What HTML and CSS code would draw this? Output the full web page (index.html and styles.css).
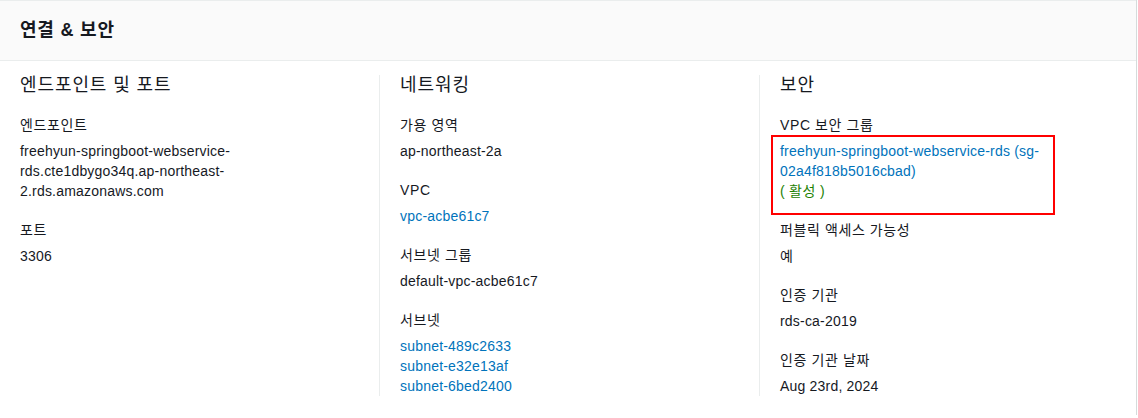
FILE: index.html
```html
<!DOCTYPE html>
<html lang="ko">
<head>
<meta charset="utf-8">
<title>연결 &amp; 보안</title>
<link rel="stylesheet" href="styles.css">
</head>
<body>
<div class="panel">
  <div class="panel-header">
    <h2 class="panel-title">연결 &amp; 보안</h2>
  </div>
  <div class="panel-body">
    <div class="column">
      <h3 class="column-title">엔드포인트 및 포트</h3>
      <div class="item">
        <div class="label">엔드포인트</div>
        <div class="value">freehyun-springboot-webservice-rds.cte1dbygo34q.ap-northeast-2.rds.amazonaws.com</div>
      </div>
      <div class="item">
        <div class="label">포트</div>
        <div class="value">3306</div>
      </div>
    </div>
    <div class="column divided">
      <h3 class="column-title">네트워킹</h3>
      <div class="item">
        <div class="label">가용 영역</div>
        <div class="value">ap-northeast-2a</div>
      </div>
      <div class="item">
        <div class="label">VPC</div>
        <div class="value"><a class="link" href="#">vpc-acbe61c7</a></div>
      </div>
      <div class="item">
        <div class="label">서브넷 그룹</div>
        <div class="value">default-vpc-acbe61c7</div>
      </div>
      <div class="item">
        <div class="label">서브넷</div>
        <div class="value">
          <a class="link block" href="#">subnet-489c2633</a>
          <a class="link block" href="#">subnet-e32e13af</a>
          <a class="link block" href="#">subnet-6bed2400</a>
        </div>
      </div>
    </div>
    <div class="column divided">
      <h3 class="column-title">보안</h3>
      <div class="item">
        <div class="label">VPC 보안 그룹</div>
        <div class="value annotated">
          <a class="link" href="#">freehyun-springboot-webservice-rds (sg-02a4f818b5016cbad)</a>
          <span class="status">( <span class="ko">활성</span> )</span>
          <span class="highlight"></span>
        </div>
      </div>
      <div class="item">
        <div class="label">퍼블릭 액세스 가능성</div>
        <div class="value ko">예</div>
      </div>
      <div class="item">
        <div class="label">인증 기관</div>
        <div class="value">rds-ca-2019</div>
      </div>
      <div class="item">
        <div class="label">인증 기관 날짜</div>
        <div class="value">Aug 23rd, 2024</div>
      </div>
    </div>
  </div>
</div>
</body>
</html>
```

FILE: styles.css
```css
html, body {
  margin: 0;
  padding: 0;
  background: #ffffff;
}

body {
  font-family: "Liberation Sans", "Noto Sans CJK KR", Arial, sans-serif;
  font-size: 14px;
  line-height: 20px;
  color: #16191f;
}

.panel {
  width: 1136px;
  border-top: 1px solid #eaeded;
  background: #ffffff;
  box-shadow: 0 1px 0 0 #7d8b8c, 0 2px 0 0 #b9c1c1, 1px 0 0 0 #d5dbdb;
}

.panel-header {
  height: 59px;
  background: #fafafa;
  border-bottom: 1px solid #eaeded;
  display: flex;
  align-items: center;
  padding: 0 20px;
}

.panel-title {
  margin: 0;
  font-size: 18px;
  line-height: 22px;
  font-weight: 700;
  letter-spacing: 0.8px;
  color: #16191f;
  position: relative;
  top: -1px;
}

.panel-body {
  display: grid;
  grid-template-columns: 379px 380px 1fr;
  padding: 14px 0 19px;
}

.column {
  padding: 0 20px;
  display: flex;
  flex-direction: column;
  gap: 19px;
  min-width: 0;
}

.column.divided {
  border-left: 1px solid #eaeded;
}

.column-title {
  margin: 0 0 1px;
  font-size: 18px;
  line-height: 20px;
  font-weight: 400;
  letter-spacing: 0.9px;
  color: #16191f;
}

.item {
  display: flex;
  flex-direction: column;
  gap: 6px;
}

.label {
  color: #16191f;
  letter-spacing: 0.6px;
}

.value {
  color: #16191f;
  letter-spacing: 0.2px;
  overflow-wrap: break-word;
}

.ko {
  letter-spacing: 0.6px;
}

.link {
  color: #0073bb;
  text-decoration: none;
}

.link.block {
  display: block;
}

.status {
  display: block;
  color: #1d8102;
}

.annotated {
  position: relative;
}

.highlight {
  position: absolute;
  left: -9px;
  top: -6px;
  width: 280px;
  height: 76px;
  border: 2px solid #ff0000;
  pointer-events: none;
}
```
